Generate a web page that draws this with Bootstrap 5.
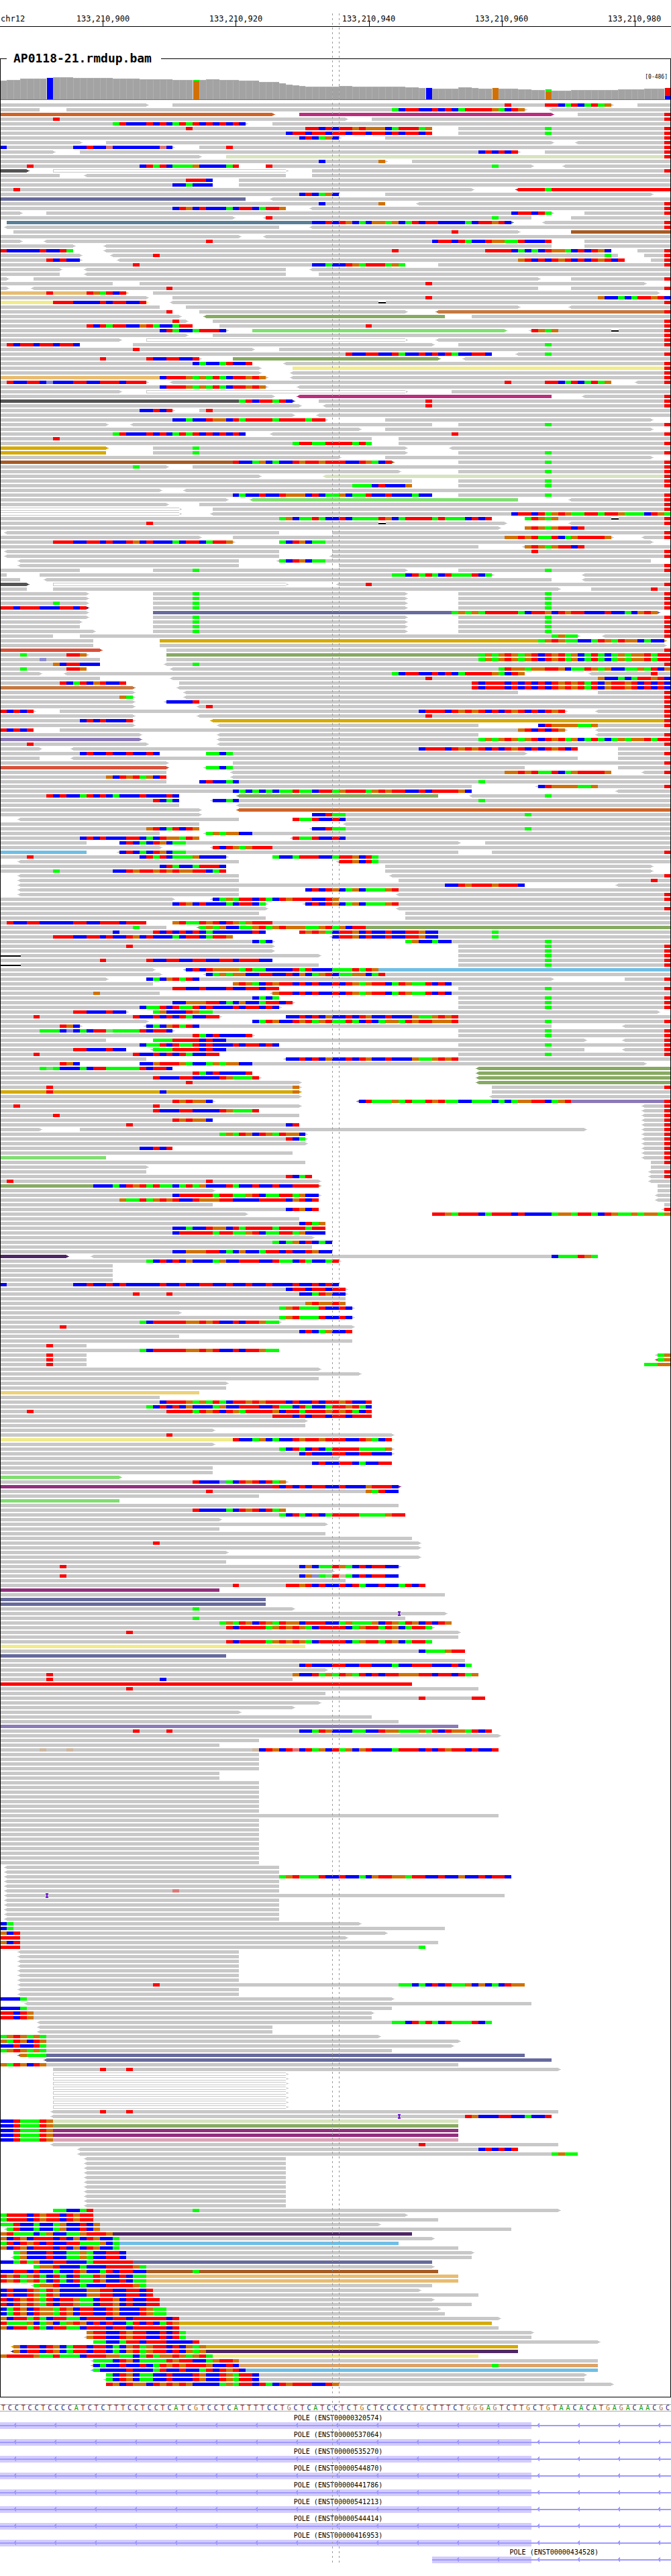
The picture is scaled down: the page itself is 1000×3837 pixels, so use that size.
<!DOCTYPE html>
<html lang="en">
<head>
<meta charset="utf-8">
<meta name="viewport" content="width=device-width, initial-scale=1">
<title>chr12:133,210,885-133,210,985</title>
<link href="https://cdn.jsdelivr.net/npm/bootstrap@5.3.0/dist/css/bootstrap.min.css" rel="stylesheet">
<style>
  body { font-family: "DejaVu Sans Mono", monospace; color: #000; background: #fff; }
  .browser-view { padding-bottom: 19px; }
  /* one column per base */
  .bases { display: grid; grid-template-columns: repeat(101, minmax(0, 1fr)); }
  .ruler { height: 40px; padding-top: 21px; border-bottom: 1px solid #000; font-size: 12px; line-height: 14px; }
  .ruler .chrom { grid-column: 1 / span 9; padding-left: 1px; }
  .ruler .tick { text-align: center; position: relative; white-space: nowrap; }
  .ruler .tick::after { content: ""; position: absolute; left: 50%; top: 10px; width: 1px; height: 8px; background: #000; }
  .sample { margin-top: 36px; border: solid #000; border-width: 1px 0; padding-bottom: 16px; position: relative; }
  .sample legend { float: none; width: auto; margin: 0 0 0 10px; padding: 0 14px 0 10px; font-size: 18px; line-height: 22px; font-weight: bold; }
  /* the side lines start at the middle of the legend */
  .sample .edge { position: absolute; top: -11px; bottom: 0; width: 1px; background: #000; z-index: 2; }
  .coverage { height: 51px; border-bottom: 1px solid #777; align-items: end; }
  .coverage .depth { background: #a3a3a3; border-top: 1px solid #b0b0b0; border-left: 1px solid #b0b0b0; display: flex; flex-direction: column; }
  .coverage .depth.variant { border-top: 0; border-left-color: #ddd; }
  .range { font-size: 8px; line-height: 10px; right: 5px; top: 12px; }
  .nt-A { color: #0a9a0a; } .nt-C { color: #1a1a8c; } .nt-G { color: #b87018; } .nt-T { color: #b01818; }
  .bg-A { background: #0f0; } .bg-C { background: #00f; } .bg-G { background: #d17105; } .bg-T { background: #f00; }
  .reads { margin-top: 5px; }
  svg { display: block; width: 100%; shape-rendering: crispEdges; }
  .sequence { margin-top: 10px; border: solid #aaa; border-width: 1px 0; font-size: 10px; line-height: 9px; height: 11px; text-align: center; }
  .genes { margin-top: 1px; font-size: 10px; line-height: 12px; }
  .gene { padding-top: 3px; }
  .gene .gene-name { text-align: center; padding-left: 8px; white-space: nowrap; }
  .guide { position: absolute; top: 20px; bottom: 20px; width: 1px; z-index: 3;
    background: repeating-linear-gradient(#999 0 3px, transparent 3px 7px); }
  .guide-start { left: calc(100% * 50 / 101); } .guide-end { left: calc(100% * 51 / 101); }
</style>
<script src="https://cdn.jsdelivr.net/npm/bootstrap@5.3.0/dist/js/bootstrap.bundle.min.js"></script>
</head>
<body>
<main class="browser-view position-relative">
  <header class="ruler bases" id="ruler"><span class="chrom">chr12</span></header>
  <fieldset class="sample">
    <legend>AP0118-21.rmdup.bam</legend>
    <div class="position-relative">
      <div class="coverage bases" id="coverage"></div>
      <span class="range position-absolute">[0-486]</span>
    </div>
    <div class="reads" id="reads"></div>
    <span class="edge start-0"></span><span class="edge end-0"></span>
  </fieldset>
  <section class="sequence bases" id="sequence" aria-label="Reference sequence"></section>
  <section class="genes" id="genes" aria-label="Genes"></section>
  <div class="guide guide-start"></div>
  <div class="guide guide-end"></div>
</main>

<script type="text/plain" id="read-data">
0-22>;26-92>:76T,82TTCATCATAG;96-E
0-6;10-79>:59ACTTCCTCTCATTTTGACTG;<83-E
o0-41>;m45-83>;87-T
0-52>:8T;56-T
0-37>:17ATCCCTCTCATATCTCTCTC;41-E
0-65:28T,46TTCTCTTGTGGGCATTTAG;69-T:82A
0-65:43CTTCTTCTTCTTCTTCTCTTCT;69-T:82A
0-51>:45CTCAGC;58-T
0-12>;16-83>;<87-T
0-26>:0C,11CCTCCtCCCCCCCtC;30-T:34T
0-8>;12-78>:72CTCTCT;82-T
0-30>;l34-T
0-58>:48C,57G;62-E
0-36:4T,21CTATCAAAGCCCCAT;40-80>:40T,74A;<85-E
k0-4>;w8-43>;47-T
0-9;<13-43;47-E
0-32:28TTTC;36-E
0-32:26CCACCC;36-E
0-71>:2T;R<78-E:82A
0-51:45CTCAGC;58-98>
s0-37;<41-E
0-58:48C,57G;<63-T
0-43:26CTGCTCCCACTTCATTG;<47-T
0-3>;7-83>:77CTTCTA;88-T
0-35>;<40-80:40T,74A;86-E
t1-77>:47CCTCTGCACGGAGCATCTTCCCCACTTGTC;<82-T
<1-42;<47-T
2-78>:68T;b86-E
0-36>;<40-E
0-3>;<7-83:31T,65CTTCTACCTGGAATCCCT;88-E
0-11>;<16-83;88-E
0-11:0TCCCCCTCCTA;<16-92:59T,73TTTTCACACTGGACTCTGC;96-T
0-12>;<17-93:23T,91A;97-T
0-12>:7TCTCC;<18-94:78GTCTCTGTCTCTGTCT;98-T
0-61:20T,47CCACCTGATTTAGA;66-T
0-9>;<13-43;<47-E
0-9;<13-43;48-E
0-1>;5-81>;86-T
0-17;21-97>:64T
0-1>;<5-81:25T;86-T
a0-19>:7T,13TGATCT;23-99>
0-22>;26-E:64T,90GCCACATTGTC
y0-22>:8TTTCCCCTCTTCCT;<26-T:57-
0-24;28-78>;<86-E
0-26:25T;30-61>;c<66-T
0-27>;g<31-67;71-E
0-28>:26T;32-T
0-29:13TCTATTCCGTACCATT;33-T:55T
0-34>:24CTACCATTTC;G38-76>;<80-T:80TGAG,92-
0-28>;32-T
0-18>;w22-61>;<66-T
0-12:1TCTTCTTCTTC;20-65>;69-T:82A
0-38>:20T;42-E
0-74:52TCCTTCCTACCTCTCTACCTTC;<78-T:82A
0-30>:15T,22TCCTTCCT;g35-66>;<70-E
0-38:29CACCATCCT;<43-T
0-39>;y44-T
0-39>;<44-T
a0-40>:24CTTTGAGATACTTGTG;<44-T
0-22>:1TCCTTCcCCCTTCCTTTCTTT;<26-92:76T,82TTCATCATAG;<96-T
0-40>:24CTTTGAGATACTTGTG;<45-E
0-18>;w22-61>;68-E
0-41>;m<45-83;<88-T
k0-44>:36ATCTTATC;48-T:64T
0-45>;<49-T:64T
0-26>:21CCTCT;30-E:31T
0-44>;<48-E
0-49>:26CCACCTGGCTATTTTATTTTATT;58-98>
0-16>;<20-65;69-T:82A
0-54>;58-98>
0-37:17ATCCCTCTCATATCTCTCTC;<41-T:68T
0-56:8T;60-E
0-56:44ATTAATTTTATA;60-T
d0-16>;23-61>:29A;<68-E
d0-16;23-61>:29A;69-T:82A
0-51>;58-98>
b0-59>:35TCCAGCACCTGTTGTTTCCTGACT;69-T:82A
0-25>:20A;29-T
0-60>;69-T:82A
0-39>;l<49-T
0-62;69-T:82A
0-62:53AAACTCCCG;69-T:82A
0-24>;<28-E
0-65:35CACCTCCTGGGCTCAAGCAATCCTCCCACC;69-T:82A
0-34>;G<38-78;<86-T
0-25>;30-T
w0-27>;32-T
w0-27>;<32-E:77CTTCTAGTGAATTATTGAAACTGA
0-74:42AGCAATACCTCAAAATGCATTTTATAAACTCT;79-T:79ATGAG,92-
0-76>:22T,57-;<86-T
0-75>;79-E:79GTGAGTTCT
<1-42;50-T
0-30>;35-92>:76GGTGTAATCAGTTTTG;<97-T
0-35>:8TTTCCTTCTCCTGCTCCCACTTCATTG;42-98>:42ACTGCAA
0-72;<79-E:79GTGAGTTCT
<1-42;50-T:80T
<1-42;<50-T
<3-36;<42-98:42ACTGCAA
<3-36;51-T
0-12;23-61>:29A;69-T:82A
0-1;6-74>:59AACTATACTAAATCA;<88-E
0-3;<7-83;<88-E
k0-4>;w8-43>;<51-T:55T
0-4;8-84>;89-E:98T
2*0-13>;23-61>:29A;69-T:82A
0-13>:8A;23-61>:29A;69-T:82A
D0-13>:0TTCTTTCCCTTCT;23-61>:29A;69-T:82A
0-13>;s23-99>:68AGAGATTTTTACTTGCTGTTCCCTCCACGTG
0-13>;23-61>:29A;69-T:82A
0-12>;23-61>:29A;69-T:82A
0-12;23-61>:29A;69-T:82A
0-14>;23-61>:29A;69-T:82A
0-8;12-87>:83AGAA;<91-T
0-14;d24-100>:81AGTGAACCATGATGGCACC
0-14;24-100>
e0-15>;25-T
0-13>:3A,10TTG;g25-E:72AGAGTGAGTCTGTAGCATACAGAGGTATT
0-15:6c;25-E:72AGAGTGAGTCTGTAGCATACAGAGGTATT
0-15:8GCTTCCC;<25-T:29A
0-13:3A,10TTG;<26-E:75ATGGAGGTTGCAATGAGCCAAGATCG
0-6>;<10-79:59ACTTCCTCTCATTTTGACTG;<89-E:98T
0-15;<26-E:64T,90GCCACATTGTC
0-19:9TCATCGTCCT;27-E:71TCTTTCTCTCTCTGTGTATCGTTGTCTCTC
c0-20>;<27-E:71TCTTTCTCTCTCTGTGTATCGTTGTCTCTC
0-20>;<28-78;90-T
0-20>:18GA;<28-T
0-20>;<25-T:25CCCCT
0-20>;<30-T:31T
0-5>:0TCTCT;9-85>:63CTTTCTGTGTCTCTGTCTCTGT;<90-T
0-20>;<30-T:64T
0-20>:12CTCTCCCT;d<32-T
0-20>;<33-72;81-T:81CTGGGGAAG
0-5:0TCTCT;9-85>:78GTCTCTG;<90-E
0-21>;<33-72;<90-T
v0-21>;<33-E:72AGAGTGAGTCTGTAGCATACAGAGGTATT
0-22>:4T;<33-T
0-6>;<11-87:63CTTTCTGTGTCTCTGTCTCTGTCT;93-E
0-24:12CTCCTCCTCCTC;31-79>:31AACA;93-T
0-6;<11-87;93-E
0-25>;35-T
e0-25>;<31-79:31AACA;93-E
0-25;<35-92:76GGTGTAATCAGTTTTG;<97-T
0-25:16GCTGTAGCT;<35-E
0-25;30-E:30CTCCAC,72A
0-71;<81-T:81CTGGGGAAG
0-71:35CACACACAATAACTTAGTTTAGTGTTCCTCTTTTGC;<93-E
0-27:7TCTCCATCTCACCCTCCCTC;g<36-66;<71-E:82A
0-27:23TCAC;<32-E:32CCAC,72A
0-27;<36-E
0-30>;o<36-E
0-30>;47-E:47CCTAA,79A
<3-36;44-E:44TAATCCTC
0-30;<52-E
0-30:22GTCATCTG;<47-E:47CCTAA,79A
0-24;<31-E:31AGAGGCC
0-30:12CTCTCCCTTCACTGGATG;<44-E:44TAATCCTC
0-13;18-69>:18CTCACTGCAA;73-E
0-24>;<32-E:32TCTGAGTTT
B0-13;<18-69:18CTCACTGCAA;74-T
0-34>:4T,21CTATCAAAGCCCC;41-E:41ACCATTTCCATTGCTA
<3-36;<51-E:51TTGCTA
0-34:24CTACCATTTC;58-98>
0-34:8A,17CCTGTTGTGTGGTTCAT;58-98>
<3-36;<59-T
<3-36;60-E:98T
<3-79:67CCTGTTTGTTTC;<93-E
<3-36;46-E:46CTCTGCAGCAAAGT
<3-36;<60-T
0-26>;<32-T:32CAGATTCTACTGTTTCCTG
0-40>:26CTGCTCCCACTTCA;<46-E:46CTCTGCAGCAAAGT
0-40>;<60-T
0-39;61-E
0-40;61-E
0-22:1TCCTTCCCCCTTCCTTTCTTT;26-E:26GTAATGTCTGAGTTT
0-25:20A;g<30-E:30AGAGCCAAGTAGTGGGAAGTAGCTT
0-40:17C,23TCTCTCTCACCCCCCTC;45-E:45TGTGACTTGCTCCTCCTTGCC,74A
0-35:8TTTCCTTCTCCTGCTCCCACTTCATTG;<50-E:50CTTGCTCCTCCTTGCC,74A
0-41>:38CAC;61-E:61AGCCACC,82A
0-41>:19T;69-T:82A
0-41>;69-T:82A
0-48>:0---;69-T:82A
0-41:15T,22TCCTTCCTTCCTTCTTTCC;69-T:82A
0-48:0---;69-T:82A
0-23>;B<28-E:28CTCTGGGGATAACCCCTATCCCAAATATG
0-24>;<31-E:31CAGAGGCCTTCCTCGCAGTCAAGGCAT
0-16>;22-83>:22CACGTATC;94-T
0-23;35-E:35GTGACTGTTCTCTCCTCTGAGTTCATGAATCTC
0-42:26TTCCTCCCTCCTTCTT;69-T:82A
0-24:14G;<41-E:41GTTCTCTCCTCTGAGTTCATGAATCTC
0-42:38CACA;69-T:82A
0-44>:26CCGGGTTCACGCCATTCT;69-T:82A
0-42>:21CAATCTAATCTCCCTCTTCTC;69-T:82A
0-19>:11TTCCCTCC;23-99>:23AGCCCTGAA
0-33>:5T,20TCCTCTCTACCTT;43-E:43CCTCTCGCCTCTGCCTCCCGAAGTGT
0-22>;38-T:38CATGCCTGTAGTAATACTCAGGATGTTGGGT,82A
0-12>:9TGC;<22-83:22CACGTATC;<94-E
0-26>:6AAACcCACTTaAAAATCTTC;69-T:82A
0-38>:29TACTCCCCT;69-T:82A
0-16;23-88>:23AAATTTTCTCC;<94-T
0-42:21CAATCTAATCTCCCTCTTCTC;69-T:82A
0-19:11TTCCCTCC;<23-88:23AAATTTTCTCC;<94-T
0-33:5T,20TCCTCTCTACCTT;69-T:82A
0-22;<43-E:43CCTCTCGCCTCTGCCTCCCGAAGTGT
0-12:9TGC;21-97>:21CCGTTTGACCAGAGGCC
0-26:6AaACCCACTTAAAAATCTTC;g<72-E
0-38:29TACTCCCCT;g<72-E
0-39>:23TCCCTTCCCCTGAAAT;g<72-E
0-45>:28T;g<72-E
0-45>:7T,44G;74-T
d0-45>:7T,24C,44G;74-E
0-45>;<74-E
0-32>:26TGTGGC;v<54-T:54CTAAAGATAATGTAACCAAACACAGGTTCAGT
0-45>:2T,23T;<97-T
0-39:23TCCCTTCCCCTGAAAT;<97-T
0-45:8T;<97-T
0-32:26TGTGGC;<97-T
0-45:19T,43CT;<97-T
0-6>;12-88>;<97-T
0-46>:33AGATGCTGATGGC;<97-T
0-46>:43TCA;<97-T
0-46>;<97-T
0-26:21CCTCT;<97-T
0-44;<97-T
G0-16;<97-T
0-46;98-T
0-22>;98-E
0-22;<98-T
0-47:43TCAT;<98-T
0-48>:1T,31T;<98-E
g0-48>:14CCCACTGTATAACATAGCCCTACCTCCTCCTTTT;99-E
0-32>;99-E
0-48>:26CTTTTTATTAAGTCAATTAGCC;<99-E
0-48:18GAATAGTGTCCTGGGTTCCCCTTTTCGTCT;<99-E
0-32;100-E
0-48:43CTGCT;<100-T
0-37>;65-E:65TTGATTTCATTTCTCCCCAGGATTACTGAAGAGGAG
0-45
0-49:45CTAG
0-49:26CCACCTGGCTATTTTATTTTATT
0-49:26CTTTTTATTAAGTCAATTAGCCC
0-47>
0-50:41ACAGCTCAC
0-47
0-50:26CCGGGTTCACGCCATTCTCCTGCC
D0-10>;<14-90:83CAAATGA
0-51>:22ACTCTCGCCCAGCCTTTCCTAACTACCAT
4*0-17
0-51:0C,11CCTCCTCTCCCCCTCCTCCTTCCTCCTCCTCCCTCCTCTC
0-52>:43CTTCTTCTT
0-52>:20T,25T,45CCATGCC
0-52
0-52:46GTGGTG
0-53>:42AGTAAATCCTC
0-27>
0-53>:42AGTAAATCCTC
0-42>:21ACTTTTTGGTGTCCTCTTGAA
0-53>:9T
0-53:45CTCAGCCT
0-27
0-53
0-13:7T
0-42:21ACTTTTTGGTGTCCTCTTGAA
0-13:7T;<99-E:99AG
0-13:7T;e<99-E:99AG
0-13:7T;97-E:97AAGG
0-48>
0-54>
0-48
0-34>
0-34
n0-30
0-24
0-56:24CTTTGAGATACTTGTGTTTCTCCTCTTGTCCT
0-56:22ACTCTCGCCCAGCCTTTCCTAACTACCATTGTAC
0-56:4T,25TTTTATGTCTGATTTTGCTTATTTGTGTACT
0-56:41TTTCTCTTCTTCTTT
0-46>
0-46
0-32>
0-59>:25T
y0-59>:35TCCAGCACCTGTTGTTTCCTGACT
0-32>
0-59>:42ACTACTCATTTTAAAAG
0-59>:45CTCCCTTCCTTCCC
0-51
0-59:47CTCCTTCACCTT
2*0-32
G0-18>
0-43>:29TCCCcACTGTCTAG
p0-60>:41TCTCTCTTCCTCCCGTTTC
0-60:31T,55GATCC
0-39
G0-18
0-60
0-43:29TCCCCACTGTCTAG
0-61:42ACTACTCATTTTAAAAGTT
0-33>
0-49>
0-33
0-49
0-62
0-63>:23T
0-63>
0-34>
0-63>
0-34
0-60>:9T,45CGCAATGACTCTTCC
0-50>
0-60:9T,45CGcAaTgACTCTTCC
0-52
0-64:35T,43TTGTCTCCTCTACCTCCATCT
p0-33
0-67
2*s0-40
0-44>:29A
0-67>:60I
0-61:29A
0-68:33AGATGCTGATGGCTTTCCAGAAAGCTGATGCTCTG
0-65>:34TCTTTTAGTGTGACTTTTCAGTTATGCATTA
0-69>:19T
0-69
0-65:34TCTTTTAGTGTGACTTTTCAGTTATGCATTA
y0-46
0-70:63CAAAGTT
s0-34
0-70
0-71:45CTCCCTTCCTTCCCACCTTTCCCTCA
0-49>
0-72:7T,44GCCTAGATGATCTCTTGGGTTCTTCTAG
0-44:7T,24C
R0-62
0-72:19T
0-49
0-73:63T,71TT
0-48>
0-44>
0-36>
0-56
0-60
v0-69
0-74:20T,25T,45CCATGCCCAACCTGGAAAGATCTGGATCT
0-75>
0-39
0-33
0-75:6g,10g,38gCTGCTtCTAGCTAGCGTCCCATTTCTCTGTTCTCCT
4*0-39
2*0-33
7*0-39
0-75
10*0-39
2*<1-42
<1-77:42AGTAAATCCTCCACGTTGGATTCCTCCGCCTCTTC
2*<1-42
<1-42:26t
<1-76:7I
5*<1-42
0-54>:0CA
0-67:0CA
0-58>:0GCT
0-52>:0TTT
0-66:0GCT
0-64:0TTT,63A
7*<3-36
<3-79:23T,60AACACTCTAAGCGCACTGG
2*<3-36
0-59>:0CCCA
<4-80
0-59:0CCCA
0-56>:0TTCTG
0-56:0TTCTG
<6-74:59AACTATACTAAATCA
2*<6-41
0-57>:0AGTGAGA
0-69>:0GATGCTG
0-68>:0CCTCCTA
0-59:0AGTGAGA
s<3-79:3GAAA
s<7-83
0-69:0GATGCTG
8-84>:15T,19T
8*w8-43>
<8-84:15T,19T
<8-83:60I,70TGCCCTTCCACCT
l0-69:0CCTAAATG
g0-69:0CCTAAATG
2*p0-69:0CCTAAATG
P0-69:0CCTAAATG
<8-84:63T
<12-78:72CTCTCT
<12-87:83AGAA
11*<13-43
8-84>:8AACCAT,29A
0-61>:0ATTTCTGTTCTGTT
0-66:0ATTTCTGTTCTGTT
0-57>:0AATCCACCAGCCTCG
<1-77:1ATCCACCAGCCTCG
D0-62:0GTAAACAGCCAAGTTTG
0-65>:0GCTGCTTTCTCGCTGCCA
B0-60:0ATCTGTCTCCTTAAAGCA
0-69:0GCTGCTTTCTCGCTGCCA
2-71>:2AGCCCTCCAAGACCTTC
<2-71:2AGCCCTCCAAGACCTTC
s0-65:0CCATAGCCTTCCCATTTTTT
5-65>:5AGGTCCCACCCTTTTGA
b0-66:0CCTTCTCCACCTGCCATCTTCC,29A
2*a0-69:0TGTAGTACTACTAATGCCTCAA
<5-65:5AGGTCCCACCCTTTTGA
0-63>:0CTCCTGATGCCCCGGTTCCTTCT
0-72:0CTCCTGATGCCCCGGTTCCTTCT
0-65>:0TCTGTGATCTTGAACTTGCTCCTT
0-71:0TCTGTGATCTTGAACTTGCTCCTT
0-66>:0CATGCTGGATGCTTCCTGCCCTGAA
0-67:0CATGCTGGATGCTTCCTGCCCTGAA
0-75>:0GCTTATACTTAACTTTCTTCTTTTTCT
d0-74:0TAAAGCAGCAGTGCTCTCCATCTCATG
0-75:0GCTTATACTTAACTTTCTTCTTTTTCT
13-80>:13GTTCCTGTTCCTCTA
<13-80:13GTTCCTGTTCCTCTA
14-90>:14AACCATTCTTTCCCCT
d<2-78:2GCTTCTGCATTCTTCACGTAGTTCTCGAG
D<2-78:2GCTTCTGCATTCTTCACGTAGTTCTCGAG
y0-72:0GTTTTGAATAAACTTTGGAACATAGGTGAGTA
<14-90:14AAACTGCAAAATGTTCCAGTTG
O<14-90:14CACCTCCTCATGTGTTTGCCTC,74A
B<14-90:14ACCCCTCCCATCCTCCATCTGTC
16-88>:16ACTGCAACCTCCCTGCCTGATTC
<16-88:16ACTGCAACCTCCCTGCCTGATTC
16-92>:16TGCTGGCTGTGTGCCCCAGATTCTACTGTTTCCTG
</script>
<script>
  const BASES = 101, UNITS = 1000;
  const px = i => Math.round(i * UNITS / BASES);
  const baseColor = { A: '#0f0', C: '#00f', G: '#d17105', T: '#f00',
    a: '#68e268', c: '#8a8ad6', g: '#cdb7a0', t: '#de7878' };
  // read colour: by the chromosome of the mate, grey for a proper pair
  const readColor = { '': '#c8c8c8', w: '#c8c8c8', o: '#cf6426', m: '#bb2d7d', l: '#d7e3bf', k: '#545454',
    R: '#f00', s: '#666a9c', t: '#587f96', b: '#a65b24', a: '#e8bc70', y: '#f1eb8c', c: '#c57840',
    g: '#87aa62', G: '#80df70', d: '#d5aa00', e: '#da4f39', v: '#8b7ab8', B: '#6fbee5', D: '#4e2665',
    p: '#912f7e', P: '#dba4b7', n: '#ecd278', O: '#dea267' };
  const rect = (x, y, w, h, c) => `<rect x="${x}" y="${y}" width="${w}" height="${h}" fill="${c}"/>`;

  function drawRead(text, y) {
    const [, kind, left, from, to, right, marks] = text.match(/^([a-zA-Z]?)(<?)(\d+)-(\d+|E|T)(>?)(?::(.*))?$/);
    const end = /\d/.test(to) ? +to : BASES;
    const x0 = px(+from), x1 = px(end), color = readColor[kind];
    let out = rect(x0, y, x1 - x0, 5, color);
    if (left) out += rect(x0 - 2, y + 1, 2, 3, color) + rect(x0 - 4, y + 2, 2, 1, color);
    if (right) out += rect(x1, y + 1, 2, 3, color) + rect(x1 + 2, y + 2, 2, 1, color);
    if (kind === 'w') out += rect(x0 + 1, y + 1, x1 - x0, 3, '#fff');
    const list = marks ? marks.split(',') : [];
    if (to === 'T') list.push('100T');
    for (const m of list) {
      let at = parseInt(m, 10);
      for (const [run] of m.replace(/^\d+/, '').matchAll(/(.)\1*/g)) {
        const a = px(at), b = px(at + run.length), ch = run[0];
        if (ch === 'I') out += rect(a - 1, y - 1, 4, 2, '#7014d6') + rect(a, y, 2, 5, '#7014d6') + rect(a - 1, y + 4, 4, 2, '#7014d6');
        else if (ch === '-') out += rect(a, y, b - a + 1, 5, '#fff') + rect(a, y + 2, b - a + 1, 2, '#000');
        else out += rect(a, y, b - a, 5, baseColor[ch]);
        at += run.length;
      }
    }
    return out;
  }

  const rows = [];
  for (const line of document.getElementById('read-data').textContent.trim().split('\n')) {
    const rep = line.match(/^(\d+)\*(.*)$/);
    for (let n = rep ? +rep[1] : 1; n > 0; n--) rows.push(rep ? rep[2] : line);
  }
  const readsHeight = rows.length * 7 - 2;
  document.getElementById('reads').innerHTML =
    `<svg viewBox="0 0 ${UNITS} ${readsHeight}" height="${readsHeight}" preserveAspectRatio="none" role="img" aria-label="Aligned reads">` +
    rows.map((row, i) => row.split(';').map(r => drawRead(r, i * 7)).join('')).join('') + '</svg>';

  // ruler: a label every 20 bases, centred on its base
  document.getElementById('ruler').innerHTML += [900, 920, 940, 960, 980].map(n =>
    `<span class="tick" style="grid-column:${n - 889} / span 11">133,210,${n}</span>`).join('');

  // coverage: runs of [bases, height], then the variant columns
  const depth = [];
  for (const [n, h] of [[1,28],[2,29],[4,31],[1,32],[3,33],[6,32],[4,31],[5,30],[5,29],[2,30],[3,29],[3,28],[3,26],[1,24],
    [1,22],[1,21],[1,20],[5,19],[2,20],[8,19],[2,18],[2,17],[4,16],[2,18],[1,17],[2,16],[1,17],[3,16],[2,15],[2,14],[1,15],
    [3,13],[7,14],[4,15],[3,16],[1,17]]) for (let i = 0; i < n; i++) depth.push(h);
  const variants = { 7: [['C', 32]], 29: [['A', 2], ['G', 27]], 64: [['C', 17]],
    74: [['G', 17]], 82: [['A', 4], ['G', 11]], 100: [['T', 12], ['C', 5]] };
  document.getElementById('coverage').innerHTML = depth.map((h, i) => {
    const v = variants[i];
    return `<div class="depth${v ? ' variant' : ''}" style="height:${h}px">` +
      (v ? v.map(([b, k]) => `<span class="bg-${b}" style="height:${k}px"></span>`).join('') : '') + '</div>';
  }).join('');

  document.getElementById('sequence').innerHTML =
    [...'TCCTCCTCCCCATCTCTTTCCTCCTCATCGTCCTCATTTTCCTGCTCATCCTCTGCTCCCCCTGCTTTCTGGGAGTCTTGCTGTAACACATGAGACAACGC']
      .map(b => `<span class="nt-${b}">${b}</span>`).join('');

  const genes = [['320574', 0], ['537064', 0], ['535270', 0], ['544870', 0], ['441786', 0], ['541213', 0],
    ['544414', 0], ['416953', 0], ['434528', 65]];
  document.getElementById('genes').innerHTML = genes.map(([id, from]) => {
    const x = px(from);
    let s = rect(x, 0, px(80) - x, 10, '#d2ccff') + rect(x, 4, UNITS - x, 2, '#9f99ff');
    for (let a = 20; a < UNITS; a += 60) if (a > x) s += `<path d="M${a} 4h1v-1h1v-1h1v-1h1v7h-1v-1h-1v-1h-1v-1h-1z" fill="#9f99ff"/>`;
    return `<div class="gene"><div class="bases"><span class="gene-name" style="grid-column:${from + 1} / -1">POLE (ENST00000${id})</span></div>` +
      `<svg viewBox="0 0 ${UNITS} 10" height="10" preserveAspectRatio="none" aria-hidden="true">${s}</svg></div>`;
  }).join('');
</script>
</body>
</html>
